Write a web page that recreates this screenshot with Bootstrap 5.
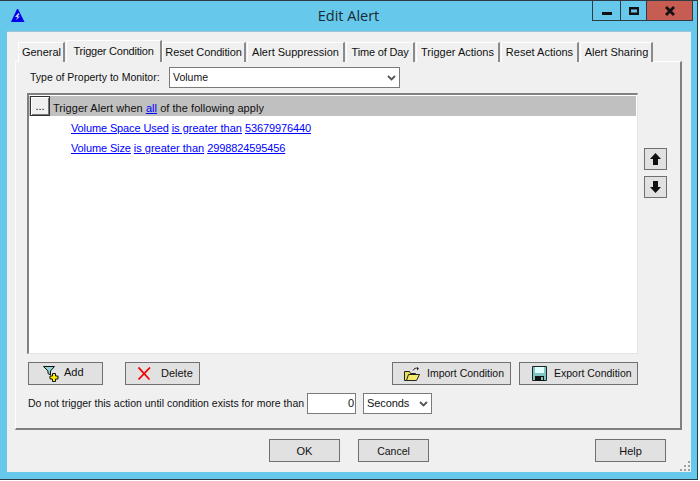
<!DOCTYPE html>
<html lang="en">
<head>
<meta charset="utf-8">
<title>Edit Alert</title>
<link href="https://cdn.jsdelivr.net/npm/bootstrap@5.3.0/dist/css/bootstrap.min.css" rel="stylesheet">
<style>
html,body{margin:0;background:#fff;font-family:"Liberation Sans",Arial,sans-serif;font-size:11px;line-height:13px;color:#111}
.wnd{width:698px;height:480px;background:#66c9eb;border-top:1px solid #2f3b42;border-bottom:1px solid #2f3b42;border-right:1px solid #2f3b42}
.capt{height:30px}
.capt-side{flex:1 1 0}
.capt-title{font-family:"Open Sans","Noto Sans",sans-serif;font-size:14.5px;line-height:20px;color:#1a2a33;padding-top:5px}
.ttl-ico{margin:8px 0 0 11px}
.wbtns{height:21px;margin-top:-1px;margin-right:4px;border:1px solid #2f3b42}
.wb{height:100%;border-right:1px solid #2f3b42}
.wb-min{width:28px}.wb-max{width:26px}.wb-x{width:45px;border-right:0;background:#c75c52}
.client{margin-left:7px;margin-right:6px;height:441px;background:#f0f0f0;border-top:1px solid #9fc6d8;padding:8px 8px 0;position:relative}
.tabstrip{height:22px;padding-left:3px;border:0;position:relative;z-index:1;align-items:flex-end;flex-wrap:nowrap}
.tabstrip .nav-link{margin:0 1px 0 0;height:20px;padding:3px 0 0;border:1px solid #fff;border-right:2px solid #8a8a8a;border-bottom:0;border-radius:0;background:#f0f0f0;color:#111;font-size:11px;line-height:13px;text-align:center;white-space:nowrap}
.tabstrip .nav-link.active{height:22px;margin:0;padding-top:4px;background:#f0f0f0;color:#111;border-color:#fff #8a8a8a #f0f0f0 #fff;letter-spacing:-.22px}
.t1{width:47px}.t2{width:96px}.t3{width:84px;letter-spacing:-.13px}.t4{width:98px}.t5{width:69px;letter-spacing:-.18px}.t6{width:84px}.t7{width:78px}.t8{width:73px}
.tabstrip .nav-link.t1,.tabstrip .nav-link.t8{padding-left:1px}
.panel{width:667px;height:369px;border:1px solid #fff;border-right:2px solid #7f7f7f;border-bottom:2px solid #7f7f7f;padding:5px 11px 0 11px;margin-top:-1px}
.lbl{width:142px;padding-left:3px;font-size:10.5px}
.sel{width:231px;height:21px;background:#fff;border:1px solid #7a7a7a;padding-left:3px;font-size:10.5px}
.sel-s{width:69px;margin-left:7px;font-size:11px;letter-spacing:-.1px}
.lst-row{margin-top:5px;height:261px}
.lst{width:611px;height:261px;background:#fff;border:2px solid #808080;border-right:1px solid #e3e3e3;border-bottom:1px solid #e3e3e3;padding:1px 1px 0 0}
.lst-hd{height:20px;background:#c0c0c0;padding-left:1px;margin-bottom:6px}
.hd-txt{padding-top:4px;letter-spacing:.05px}
.dots{width:20px;height:20px;background:#f0f0f0;border:1px solid #333;font-size:11px;line-height:15px;text-align:center;padding:1px 0 0;margin-right:3px;box-shadow:inset 1px 1px #fff,inset -1px -1px #777}
.lst a{color:#00f;text-decoration:underline}
.cond{height:20px;padding-left:42px;gap:3px}
.tight{letter-spacing:-.12px}
.updn{margin-left:6px;padding-top:55px;gap:6px}
.b{background:#e1e1e1;border:1px solid #707070;border-radius:0;color:#111;font-size:11px;line-height:13px;padding:0}
.b:hover{background:#e1e1e1;border-color:#707070;color:#111}
.b-ar{width:23px;height:22px}
.act-row{margin-top:8px;height:23px;padding-left:1px}
.b-add{width:75px;height:23px;padding-left:14px;gap:5px}
.add-txt{padding-bottom:2px}
.b-del{width:75px;height:23px;margin-left:22px;padding-left:11px;gap:9px}
.b-imp{width:119px;height:23px;margin-left:192px;padding-left:11px;gap:6px;font-size:10.5px}
.b-exp{width:119px;height:23px;margin-left:8px;padding-left:12px;gap:7px;font-size:10.5px}
.dly-row{margin-top:8px;height:21px;padding-left:1px}
.dly-lbl{width:279px;font-size:10.5px;white-space:nowrap}
.inp{width:49px;height:21px;background:#fff;border:1px solid #7a7a7a;text-align:right;padding:3px 1px 0 0}
.foot{height:41px;padding-top:9px}
.b-f{width:71px;height:23px;padding-top:1px}
.b-ok{margin-left:254px}
.b-c{margin-left:18px;font-size:10.5px}
.b-h{margin-left:166px}
.grip{position:absolute;right:0;bottom:0}
</style>
</head>
<body>
<div class="wnd d-flex flex-column">
  <div class="capt d-flex">
    <div class="capt-side">
      <svg class="ttl-ico d-block" width="14" height="14" viewBox="0 0 14 14"><path d="M6 0h1l6.500 13H0z" fill="#0000ee"/><path d="M7.500 4L4 8h2.500L5 11l4-3.500H6.700L8.500 5z" fill="#d8d8f0"/></svg>
    </div>
    <div class="capt-title">Edit Alert</div>
    <div class="capt-side d-flex justify-content-end">
      <div class="wbtns d-flex">
        <div class="wb wb-min d-flex justify-content-center"><svg width="12" height="19" viewBox="0 0 12 19"><rect x="1" y="11" width="10" height="3" fill="#111"/></svg></div>
        <div class="wb wb-max d-flex justify-content-center"><svg width="12" height="19" viewBox="0 0 12 19"><path d="M1 6h10v8H1zM3 8.500v3h6v-3z" fill="#111" fill-rule="evenodd"/></svg></div>
        <div class="wb wb-x d-flex justify-content-center"><svg width="12" height="19" viewBox="0 0 12 19"><path d="M2 6l8 8M10 6l-8 8" stroke="#111" stroke-width="2.800" fill="none"/></svg></div>
      </div>
    </div>
  </div>
  <div class="client">
    <ul class="nav nav-tabs tabstrip">
      <li class="nav-item"><a class="nav-link t1" href="#">General</a></li>
      <li class="nav-item"><a class="nav-link t2 active" href="#">Trigger Condition</a></li>
      <li class="nav-item"><a class="nav-link t3" href="#">Reset Condition</a></li>
      <li class="nav-item"><a class="nav-link t4" href="#">Alert Suppression</a></li>
      <li class="nav-item"><a class="nav-link t5" href="#">Time of Day</a></li>
      <li class="nav-item"><a class="nav-link t6" href="#">Trigger Actions</a></li>
      <li class="nav-item"><a class="nav-link t7" href="#">Reset Actions</a></li>
      <li class="nav-item"><a class="nav-link t8" href="#">Alert Sharing</a></li>
    </ul>
    <div class="panel">
      <div class="d-flex align-items-center">
        <div class="lbl">Type of Property to Monitor:</div>
        <div class="sel d-flex align-items-center justify-content-between">
          <span>Volume</span>
          <svg class="me-1" width="9" height="6" viewBox="0 0 9 6"><path d="M1 1l3.500 3.500L8 1" stroke="#555" stroke-width="1.800" fill="none"/></svg>
        </div>
      </div>
      <div class="lst-row d-flex">
        <div class="lst">
          <div class="lst-hd d-flex align-items-center">
            <button type="button" class="dots">...</button>
            <span class="hd-txt">Trigger Alert when <a href="#">all</a> of the following apply</span>
          </div>
          <div class="cond d-flex"><a class="tight" href="#">Volume Space Used</a><a href="#">is greater than</a><a class="tight" href="#">53679976440</a></div>
          <div class="cond d-flex"><a class="tight" href="#">Volume Size</a><a href="#">is greater than</a><a class="tight" href="#">2998824595456</a></div>
        </div>
        <div class="updn d-flex flex-column">
          <button type="button" class="btn b b-ar d-flex align-items-center justify-content-center"><svg width="11" height="12" viewBox="0 0 11 12"><path d="M5.500 0L11 6H8v6H3V6H0z" fill="#111"/></svg></button>
          <button type="button" class="btn b b-ar d-flex align-items-center justify-content-center"><svg width="11" height="12" viewBox="0 0 11 12"><path d="M5.500 12L11 6H8V0H3v6H0z" fill="#111"/></svg></button>
        </div>
      </div>
      <div class="act-row d-flex">
        <button type="button" class="btn b b-add d-flex align-items-center">
          <svg width="16" height="16" viewBox="0 0 16 16"><path d="M.5.500h11L7.500 5v4L5 7.500V5z" fill="#8fd4d4" stroke="#111"/><path d="M9.500 7.500h3V10H15v3h-2.500v2.500h-3V13H7v-3h2.500z" fill="#ffee00" stroke="#111"/></svg>
          <span class="add-txt">Add</span>
        </button>
        <button type="button" class="btn b b-del d-flex align-items-center">
          <svg width="15" height="14" viewBox="0 0 15 14"><path d="M1.500 0.500l11 12M13 0.500L1.500 12.500" stroke="#f00000" stroke-width="1.800" fill="none"/></svg>
          <span>Delete</span>
        </button>
        <button type="button" class="btn b b-imp d-flex align-items-center">
          <svg width="17" height="14" viewBox="0 0 17 14"><path d="M.5 4.500h5l1 2h5v7H.5z" fill="#e9df59" stroke="#222"/><path d="M2.500 13.500l2-6h11l-3 6z" fill="#f4ea6a" stroke="#222"/><path d="M9 3.500c1-2 3-3 5-2" stroke="#222" fill="none"/><path d="M13 0l2 1.500-2 2z" fill="#222"/></svg>
          <span>Import Condition</span>
        </button>
        <button type="button" class="btn b b-exp d-flex align-items-center">
          <svg width="15" height="15" viewBox="0 0 15 15"><path d="M.5.500h14v14H.5z" fill="#7fc4c4" stroke="#222"/><path d="M3 1h9v6H3z" fill="#dff"/><path d="M3 10h9v5H3z" fill="#111"/><path d="M9 11h2v3H9z" fill="#7fc4c4"/></svg>
          <span>Export Condition</span>
        </button>
      </div>
      <div class="dly-row d-flex align-items-center">
        <div class="dly-lbl">Do not trigger this action until condition exists for more than</div>
        <div class="inp">0</div>
        <div class="sel sel-s d-flex align-items-center justify-content-between">
          <span>Seconds</span>
          <svg class="me-1" width="9" height="6" viewBox="0 0 9 6"><path d="M1 1l3.500 3.500L8 1" stroke="#555" stroke-width="1.800" fill="none"/></svg>
        </div>
      </div>
    </div>
    <div class="foot d-flex">
      <button type="button" class="btn b b-f b-ok">OK</button>
      <button type="button" class="btn b b-f b-c">Cancel</button>
      <button type="button" class="btn b b-f b-h">Help</button>
    </div>
    <svg class="grip" width="11" height="11" viewBox="0 0 11 11" fill="#a0a0a0"><rect x="8" y="0" width="2" height="2"/><rect x="4" y="4" width="2" height="2"/><rect x="8" y="4" width="2" height="2"/><rect x="0" y="8" width="2" height="2"/><rect x="4" y="8" width="2" height="2"/><rect x="8" y="8" width="2" height="2"/></svg>
  </div>
</div>
<script src="https://cdn.jsdelivr.net/npm/bootstrap@5.3.0/dist/js/bootstrap.bundle.min.js"></script>
</body>
</html>
